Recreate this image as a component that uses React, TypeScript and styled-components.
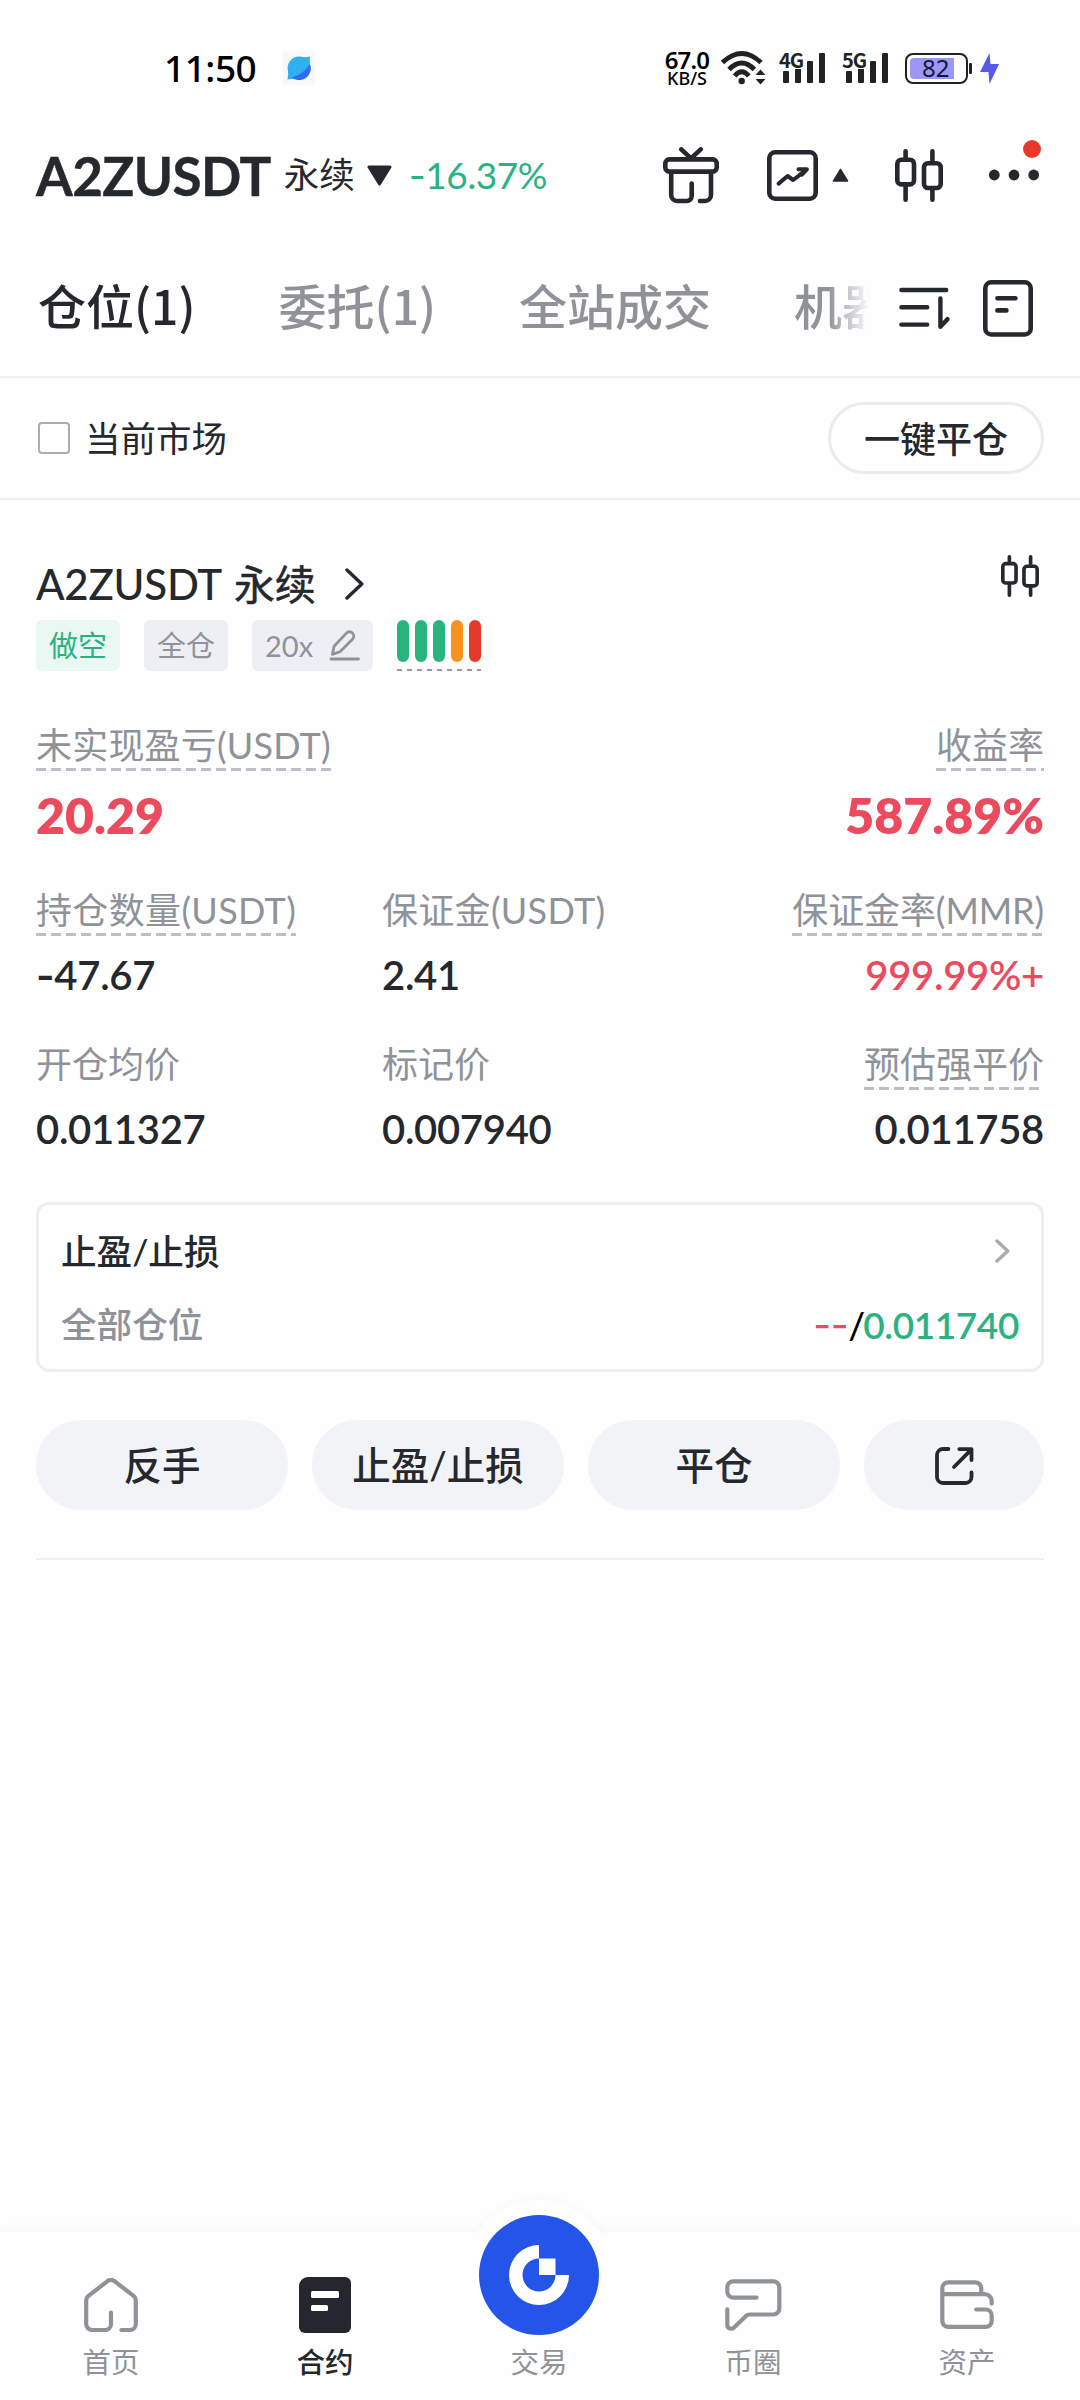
import React from "react";
import styled, { createGlobalStyle, css } from "styled-components";

const ink = "#25282d";
const grey = "#8f9399";
const green = "#2bb283";
const red = "#ec4a5f";
const line = "#eeeeee";

const Global = createGlobalStyle`
  *{box-sizing:border-box}
  body{margin:0;background:#fff}
`;

const Screen = styled.div`
  width: 1080px;
  height: 2400px;
  display: flex;
  flex-direction: column;
  overflow: hidden;
  background: #fefefe;
  color: ${ink};
  font-family: Lato, "Noto Sans CJK SC", sans-serif;
  svg { display: block; flex: none; }
`;

/* ---------- status bar ---------- */
const StatusBar = styled.header`
  height: 136px;
  padding: 0 81px 0 164px;
  display: flex;
  align-items: center;
  color: #000;
`;
const Clock = styled.span`
  font: 500 37px/44px "Noto Sans", sans-serif;
  letter-spacing: -0.5px;
  margin-right: 27px;
`;
const AppBadge = styled.span`
  width: 32px;
  height: 34px;
  display: grid;
  place-items: center;
  background: #f8f8f8;
`;
const StatusRight = styled.div`
  margin-left: auto;
  display: flex;
  align-items: center;
`;
const NetSpeed = styled.div`
  width: 46px;
  padding-top: 2px;
  display: flex;
  flex-direction: column;
  align-items: center;
  font-family: "Noto Sans", sans-serif;
  font-weight: 600;
  margin-right: 11px;
`;
const SpeedValue = styled.span`font-size: 24px; line-height: 19px; letter-spacing: -0.8px;`;
const SpeedUnit = styled.span`font-size: 18px; line-height: 19px; font-weight: 500;`;
const Signal = styled.div`
  position: relative;
  display: flex;
  align-items: flex-end;
  gap: 6px;
  height: 32px;
  width: 63px;
  padding-left: 4px;
  padding-bottom: 1px;
`;
const SignalBar = styled.i<{ $h: number }>`
  width: 6px;
  height: ${p => p.$h}px;
  border-radius: 1px;
  background: #222;
`;
const SignalLabel = styled.span`
  position: absolute;
  left: 0;
  top: -2px;
  font: 700 20px/20px "Noto Sans CJK SC", sans-serif;
  letter-spacing: -1px;
  color: #222;
  background: #fefefe;
  height: 19px;
`;
const Battery = styled.div`
  width: 63px;
  height: 31px;
  border: 2px solid #222;
  border-radius: 8px;
  padding: 3px;
`;
const Charge = styled.div`
  width: 44px;
  height: 21px;
  padding-left: 12px;
  border-radius: 4px 0 0 4px;
  background: #9b98f5;
  color: #15173a;
  font: 400 24px/20px "Noto Sans", sans-serif;
`;
const BatteryNub = styled.i`
  width: 3px;
  height: 11px;
  margin: 0 8px 0 1px;
  border-radius: 1px;
  background: #222;
`;

/* ---------- pair header ---------- */
const PairBar = styled.div`
  height: 104px;
  padding: 0 40px 26px 36px;
  display: flex;
  align-items: center;
`;
const PairName = styled.h1`
  margin: 0;
  padding-top: 1px;
  font-size: 53px;
  line-height: 60px;
  font-weight: 700;
  letter-spacing: -0.6px;
  -webkit-text-stroke: 0.4px ${ink};
`;
const PairKind = styled.span`
  margin: 0 12px 0 13px;
  font-size: 35.5px;
  line-height: 44px;
`;
const Change = styled.span`
  margin-left: 17px;
  font-size: 37px;
  line-height: 44px;
  letter-spacing: -0.4px;
  color: ${green};
`;
const Sign = styled.span`font-family: Inter, sans-serif;`;
const PairTools = styled.div`
  margin-left: auto;
  display: flex;
  align-items: center;
`;
const Tool = styled.span<{ $ml?: number }>`
  position: relative;
  margin-left: ${p => p.$ml ?? 0}px;
`;
const RedDot = styled.i`
  position: absolute;
  right: -1px;
  top: -29px;
  width: 18px;
  height: 18px;
  border-radius: 50%;
  background: #e8392b;
`;

/* ---------- tabs ---------- */
const TabBar = styled.nav`
  height: 138px;
  padding: 0 47px 0 38px;
  display: flex;
  align-items: center;
  border-bottom: 2px solid ${line};
`;
const Tabs = styled.div`
  width: 832px;
  display: flex;
  gap: 83px;
  overflow: hidden;
  mask-image: linear-gradient(90deg, #000 790px, transparent 832px);
`;
const Tab = styled.span<{ $on?: boolean }>`
  flex: none;
  font: 500 48px/80px "Noto Sans CJK SC", sans-serif;
  padding-bottom: 8px;
  color: ${p => (p.$on ? ink : grey)};
`;
const TabTools = styled.div`
  margin-left: auto;
  display: flex;
  gap: 33px;
  align-items: center;
`;

/* ---------- filter ---------- */
const FilterBar = styled.div`
  height: 122px;
  padding: 0 36px 0 38px;
  display: flex;
  align-items: center;
  border-bottom: 2px solid ${line};
`;
const CheckBox = styled.i`
  width: 32px;
  height: 32px;
  border: 2px solid #adadad;
  border-radius: 4px;
`;
const FilterText = styled.span`
  margin-left: 15px;
  padding-top: 1px;
  font-size: 35.5px;
  line-height: 48px;
`;
const CloseAll = styled.button`
  margin-left: auto;
  width: 216px;
  height: 72px;
  border: 3px solid #ebebec;
  border-radius: 36px;
  background: #fff;
  color: ${ink};
  font: 500 36px/60px Lato, "Noto Sans CJK SC", sans-serif;
  padding: 2px 0 0;
`;

/* ---------- position ---------- */
const Position = styled.section`
  margin: 0 36px;
  padding: 55px 0 48px;
  display: flex;
  flex-direction: column;
  border-bottom: 2px solid ${line};
`;
const TitleRow = styled.div`
  height: 65px;
  display: flex;
  justify-content: space-between;
  padding-right: 5px;
`;
const Title = styled.h2`
  margin: 0;
  height: 58px;
  display: flex;
  align-items: center;
  gap: 12px;
  font-size: 42px;
  line-height: 58px;
  font-weight: 500;
  letter-spacing: -0.25px;
`;
const TitleKind = styled.span`
  font-size: 41px;
  font-weight: 400;
  margin-right: 18px;
  padding-top: 1px;
  -webkit-text-stroke: 0.5px ${ink};
`;
const TagRow = styled.div`
  display: flex;
  gap: 24px;
  height: 51px;
`;
const Tag = styled.span<{ $green?: boolean }>`
  height: 51px;
  padding: 0 13px;
  display: flex;
  align-items: center;
  gap: 16px;
  border-radius: 6px;
  font-size: 29px;
  line-height: 51px;
  background: ${p => (p.$green ? "#e9f8f2" : "#eeeff5")};
  color: ${p => (p.$green ? green : grey)};
`;
const dashed = css`
  background-repeat: no-repeat;
  background-position: left bottom;
`;
const RiskBars = styled.div`
  ${dashed};
  height: 51px;
  display: flex;
  gap: 6px;
  background-image: repeating-linear-gradient(90deg, #999 0 5px, transparent 5px 10px);
  background-size: 100% 2px;
`;
const RiskBar = styled.i<{ $c: string }>`
  width: 12px;
  height: 42px;
  border-radius: 6px;
  background: ${p => p.$c};
`;
const Grid = styled.div<{ $cols: string; $mt: number }>`
  margin-top: ${p => p.$mt}px;
  display: grid;
  grid-template-columns: ${p => p.$cols};
`;
const Cell = styled.div<{ $end?: boolean }>`
  display: flex;
  flex-direction: column;
  align-items: ${p => (p.$end ? "flex-end" : "flex-start")};
`;
const Label = styled.span<{ $dash?: boolean; $ls?: number }>`
  ${dashed};
  height: 49px;
  font-size: 36px;
  line-height: 47px;
  letter-spacing: ${p => p.$ls ?? 0}px;
  color: ${grey};
  background-image: ${p => (p.$dash ? "repeating-linear-gradient(90deg, #bcbdc5 0 10px, transparent 10px 15px)" : "none")};
  background-size: 100% 3px;
`;
const Big = styled.strong`
  margin-top: 19px;
  font-size: 50px;
  line-height: 50px;
  font-weight: 800;
  color: ${red};
`;
const Value = styled.span<{ $red?: boolean }>`
  margin-top: 17px;
  font-size: 40px;
  line-height: 44px;
  font-weight: 600;
  letter-spacing: -0.3px;
  color: ${p => (p.$red ? red : ink)};
`;
const StopBox = styled.div`
  margin-top: 51px;
  height: 170px;
  padding: 24px 22px 22px;
  border: 3px solid ${line};
  border-radius: 13px;
  display: flex;
  flex-direction: column;
  justify-content: space-between;
`;
const StopRow = styled.div<{ $pr?: number }>`
  display: flex;
  align-items: center;
  justify-content: space-between;
  height: 44px;
  padding-right: ${p => p.$pr ?? 0}px;
`;
const StopTitle = styled.span`font-size: 35.6px; font-weight: 500; line-height: 44px; padding-top: 2px;`;
const StopScope = styled.span`font-size: 35.6px; line-height: 44px; color: ${grey}; font-weight: 500;`;
const StopPrices = styled.span`
  font-size: 37px;
  line-height: 44px;
  color: #000;
  font-weight: 500;
  letter-spacing: -0.4px;
`;
const Slash = styled.span`letter-spacing: -2px;`;
const Unset = styled.span`
  color: ${red};
  font: 400 39px/44px Inter, sans-serif;
`;
const StopLoss = styled.span`color: ${green}; font-weight: 600;`;
const Actions = styled.div`
  margin-top: 48px;
  display: grid;
  grid-template-columns: 252px 252px 252px 180px;
  gap: 24px;
`;
const Action = styled.button`
  height: 90px;
  padding: 1px 0 0;
  border: 0;
  border-radius: 45px;
  background: #f1f3f7;
  color: ${ink};
  font: 500 38.5px/89px Lato, "Noto Sans CJK SC", sans-serif;
  display: flex;
  align-items: center;
  justify-content: center;
`;

/* ---------- bottom nav ---------- */
const BottomNav = styled.nav`
  margin-top: auto;
  height: 168px;
  padding: 0 6px 0 4px;
  display: grid;
  grid-template-columns: repeat(5, 1fr);
  background: #fefefe;
  box-shadow: 0 -4px 10px rgba(40, 50, 70, 0.025);
`;
const NavItem = styled.div<{ $on?: boolean }>`
  position: relative;
  display: flex;
  flex-direction: column;
  align-items: center;
  padding-top: 44px;
  color: ${p => (p.$on ? ink : grey)};
`;
const NavIcon = styled.span`
  height: 58px;
  display: flex;
  align-items: center;
`;
const NavLabel = styled.span<{ $on?: boolean }>`
  margin-top: 8px;
  font-size: 28.5px;
  line-height: 40px;
  font-weight: ${p => (p.$on ? 500 : 400)};
`;
const TradeBump = styled.i`
  position: absolute;
  left: 50%;
  top: -32px;
  width: 150px;
  height: 150px;
  margin-left: -75px;
  border-radius: 50%;
  background: #fefefe;
  box-shadow: 0 -3px 8px rgba(40, 50, 70, 0.02);
  clip-path: inset(-20px -20px 115px -20px);
`;
const TradeButton = styled.span`
  position: absolute;
  left: 50%;
  top: -17px;
  margin-left: -60px;
`;

/* ---------- icons ---------- */
const stroke = { fill: "none", stroke: "currentColor", strokeLinecap: "round" as const, strokeLinejoin: "round" as const };

const Candles = ({ w, h }: { w: number; h: number }) => (
  <svg width={w} height={h} viewBox="0 0 48 53" {...stroke} strokeWidth={4.6}>
    <rect x="2.3" y="10.8" width="16.7" height="24.6" rx="4" />
    <path d="M10.6 2.3V10M10.6 36v14.7" />
    <rect x="29" y="14.2" width="16.7" height="24.8" rx="4" />
    <path d="M37.4 2.3V13M37.4 40v10.7" />
  </svg>
);
const Gift = () => (
  <svg width="56" height="57" viewBox="0 0 56 57" {...stroke} strokeWidth={4.6}>
    <rect x="2.3" y="12.4" width="51.4" height="12.2" rx="4" />
    <path d="M18.3 2.4l9.7 9 9.7-9M8.2 26v22a6 6 0 0 0 6 6h9.5a5 5 0 0 0 5-5V36.6M48 26v22a6 6 0 0 1-6 6h-5" />
  </svg>
);
const ChartBox = () => (
  <svg width="51" height="51" viewBox="0 0 51 51" {...stroke} strokeWidth={4.6}>
    <rect x="2.3" y="2.3" width="46.4" height="46.4" rx="6" />
    <path d="M11.6 33.6l9-7.6 5.6 4L39.6 19.6M31.5 19.3h8.4l-5 5.4" strokeWidth="4" />
  </svg>
);
const SortIcon = () => (
  <svg width="52" height="43" viewBox="0 0 52 43" {...stroke} strokeWidth={4.4}>
    <path d="M3.4 3h44.8M3.4 20.3h25.8M3.4 37.6h25.8M42.4 11.4v28.4l7-7.6" />
  </svg>
);
const DocIcon = () => (
  <svg width="50" height="57" viewBox="0 0 50 57" {...stroke} strokeWidth={4.6}>
    <rect x="2.3" y="2.3" width="45.4" height="52.2" rx="6" />
    <path d="M14.4 18.3h18M14.4 30.4h9" />
  </svg>
);
const Pencil = () => (
  <svg width="31" height="31" viewBox="0 0 31 31" {...stroke} strokeWidth={2.8}>
    <path d="M3.4 24.4l1.7-8.2L17.4 3.1a4.1 4.1 0 0 1 6.1 0 4.4 4.4 0 0 1 0 6.1L11 21.8zM2 29h27.500" />
  </svg>
);
const Share = () => (
  <svg width="39" height="38" viewBox="0 0 39 38" {...stroke} strokeWidth={3.8}>
    <path d="M13.4 2H8a6 6 0 0 0-6 6v22a6 6 0 0 0 6 6h22.5a6 6 0 0 0 6-6v-4.5M24.3 2.1h12.2v11M36 2.8L19 20" />
  </svg>
);
const Home = () => (
  <svg width="54" height="54" viewBox="0 0 54 54" {...stroke} strokeWidth={4.2}>
    <path d="M27 34.6V46a6 6 0 0 1-6 6H8.2a6 6 0 0 1-6-6V22.6a6 6 0 0 1 2.2-4.7L23.5 3.2a5.6 5.6 0 0 1 7 0l19.1 14.7a6 6 0 0 1 2.2 4.7V46a6 6 0 0 1-6 6h-8.4" />
  </svg>
);
const Contract = () => (
  <svg width="52" height="56" viewBox="0 0 52 56">
    <path fill="#25272f" d="M9 0h37a6 6 0 0 1 6 6v44a6 6 0 0 1-6 6H6a6 6 0 0 1-6-6V9a9 9 0 0 1 9-9z" />
    <rect x="12" y="14" width="28" height="7" rx="1.5" fill="#fff" />
    <rect x="12" y="28" width="17" height="6" rx="1.5" fill="#fff" />
  </svg>
);
const Chat = () => (
  <svg width="57" height="52" viewBox="0 0 57 52" {...stroke} strokeWidth={4.2}>
    <path d="M31.5 18.7H8.8a6.3 6.3 0 0 1-6.5-6.3V8.3a6 6 0 0 1 6-6h40a6 6 0 0 1 6 6v21.2a6 6 0 0 1-6 6H24.6a5 5 0 0 0-3.8 1.7L9 48.4c-2.2 2.2-6.7 1.3-6.7-2.4V30.4" />
  </svg>
);
const Wallet = () => (
  <svg width="54" height="50" viewBox="0 0 54 50" {...stroke} strokeWidth={4.2}>
    <path d="M2.3 14.2h42.4a7 7 0 0 1 7 7v2.4M41.2 13.4V8.3a6 6 0 0 0-6-6H8.3a6 6 0 0 0-6 6v32.6a6 6 0 0 0 6 6h37.4a6 6 0 0 0 6-6v-5.4a6 6 0 0 0-6-6H36.2" />
  </svg>
);
const Trade = () => (
  <svg width="120" height="120" viewBox="0 0 120 120">
    <circle cx="60" cy="60" r="60" fill="#2455e8" />
    <path fill="#fff" d="M60 30a30 30 0 1 0 30 30H76.5a16.5 16.5 0 1 1-16.5-16.5z" />
    <path fill="#fff" d="M60 43.5h16.5V60H60z" />
  </svg>
);
const Wifi = () => (
  <svg width="46" height="36" viewBox="0 0 46 36" fill="none" stroke="#222" strokeWidth="4.8">
    <path d="M1.5 12.5Q20.7-5.5 40 12.5M8 19.5Q20.7 6.500 33.4 19.5M13.6 26Q20.7 17.500 27.8 26" />
    <circle cx="20.7" cy="31" r="3.2" fill="#222" stroke="none" />
    <path d="M34.500 25l5-5.500 5 5.500zM34.500 29h10l-5 5.500z" fill="#222" stroke="none" />
  </svg>
);
const Leaf = () => (
  <svg width="24" height="24" viewBox="0 0 24 24">
    <circle cx="12" cy="12" r="11.400" fill="#2fb1ee" />
    <path d="M14 1Q19 1.500 23 .5 22.500 5 23 10zM1 14Q1.500 19 .5 23.500 6 22.500 10 23z" fill="#2fb1ee" />
    <path d="M22.800 8A11.500 11.500 0 0 1 5 21.500Q17 18 22.800 8z" fill="#2f6bf5" />
  </svg>
);

const stats = [
  [
    { label: "持仓数量(USDT)", value: "47.67", neg: true, dash: true, ls: 0.35 },
    { label: "保证金(USDT)", value: "2.41", ls: 0.3 },
    { label: "保证金率(MMR)", value: "999.99%+", dash: true, red: true, ls: -0.1 },
  ],
  [
    { label: "开仓均价", value: "0.011327" },
    { label: "标记价", value: "0.007940" },
    { label: "预估强平价", value: "0.011758", dash: true },
  ],
] as { label: string; value: string; dash?: boolean; red?: boolean; neg?: boolean; ls?: number }[][];

const signals = ["4G", "5G"];
const barHeights = [12, 15, 22, 30];
const risk = ["#27b57d", "#27b57d", "#27b57d", "#f7931e", "#e5392c"];

export default function App() {
  return (
    <Screen>
      <Global />
      <StatusBar>
        <Clock>11:50</Clock>
        <AppBadge><Leaf /></AppBadge>
        <StatusRight>
          <NetSpeed><SpeedValue>67.0</SpeedValue><SpeedUnit>KB/S</SpeedUnit></NetSpeed>
          <Wifi />
          {signals.map((s, i) => (
            <Tool key={s} $ml={i ? 0 : 12}>
              <Signal>
                {barHeights.map(h => <SignalBar key={h} $h={h} />)}
                <SignalLabel>{s}</SignalLabel>
              </Signal>
            </Tool>
          ))}
          <Battery><Charge>82</Charge></Battery>
          <BatteryNub />
          <svg width="19" height="31" viewBox="0 0 19 31"><path d="M9.5 0L0 19h8.5l1 12L19 11h-8.5z" fill="#5759ea" /></svg>
        </StatusRight>
      </StatusBar>

      <PairBar>
        <PairName>A2ZUSDT</PairName>
        <PairKind>永续</PairKind>
        <svg width="25" height="21" viewBox="0 0 25 21"><path d="M2 2h21L12.5 19z" fill={ink} stroke={ink} strokeWidth="3" strokeLinejoin="round" /></svg>
        <Change><Sign>-</Sign>16.37%</Change>
        <PairTools>
          <Tool><Gift /></Tool>
          <Tool $ml={48}><ChartBox /></Tool>
          <Tool $ml={14}><svg width="17" height="14" viewBox="0 0 17 14"><path d="M8.5 1.5L15.5 13h-14z" fill={ink} stroke={ink} strokeWidth="1.5" strokeLinejoin="round" /></svg></Tool>
          <Tool $ml={46}><Candles w={48} h={53} /></Tool>
          <Tool $ml={45}>
            <svg width="52" height="12" viewBox="0 0 52 12" fill={ink}><circle cx="6.3" cy="6" r="5.4" /><circle cx="26" cy="6" r="5.4" /><circle cx="45.7" cy="6" r="5.4" /></svg>
            <RedDot />
          </Tool>
        </PairTools>
      </PairBar>

      <TabBar>
        <Tabs><Tab $on>仓位(1)</Tab><Tab>委托(1)</Tab><Tab>全站成交</Tab><Tab>机器</Tab></Tabs>
        <TabTools><SortIcon /><DocIcon /></TabTools>
      </TabBar>

      <FilterBar>
        <CheckBox />
        <FilterText>当前市场</FilterText>
        <CloseAll>一键平仓</CloseAll>
      </FilterBar>

      <Position>
        <TitleRow>
          <Title>
            A2ZUSDT<TitleKind>永续</TitleKind>
            <svg width="19" height="32" viewBox="0 0 19 32" {...stroke} strokeWidth={3.4}><path d="M2 2l14.8 14L2 30" /></svg>
          </Title>
          <Candles w={38} h={42} />
        </TitleRow>
        <TagRow>
          <Tag $green>做空</Tag>
          <Tag>全仓</Tag>
          <Tag>20x<Pencil /></Tag>
          <RiskBars>
            {risk.map((c, i) => <RiskBar key={i} $c={c} />)}
          </RiskBars>
        </TagRow>
        <Grid $cols="1fr 1fr" $mt={51}>
          <Cell><Label $dash $ls={0.2}>未实现盈亏(USDT)</Label><Big>20.29</Big></Cell>
          <Cell $end><Label $dash>收益率</Label><Big>587.89%</Big></Cell>
        </Grid>
        {stats.map((row, i) => (
          <Grid key={i} $cols="346px 1fr 1fr" $mt={i ? 43 : 47}>
            {row.map((s, j) => (
              <Cell key={s.label} $end={j === 2}>
                <Label $dash={s.dash} $ls={s.ls}>{s.label}</Label>
                <Value $red={s.red}>{s.neg && <Sign>-</Sign>}{s.value}</Value>
              </Cell>
            ))}
          </Grid>
        ))}
        <StopBox>
          <StopRow $pr={9}>
            <StopTitle>止盈/止损</StopTitle>
            <svg width="15" height="24" viewBox="0 0 15 24" {...stroke} stroke="#a9abad" strokeWidth={3.4}><path d="M2 2l10.8 10L2 22" /></svg>
          </StopRow>
          <StopRow>
            <StopScope>全部仓位</StopScope>
            <StopPrices><Unset>--</Unset><Slash>/</Slash><StopLoss>0.011740</StopLoss></StopPrices>
          </StopRow>
        </StopBox>
        <Actions>
          <Action>反手</Action>
          <Action>止盈/止损</Action>
          <Action>平仓</Action>
          <Action><Share /></Action>
        </Actions>
      </Position>

      <BottomNav>
        <NavItem><NavIcon><Home /></NavIcon><NavLabel>首页</NavLabel></NavItem>
        <NavItem $on><NavIcon><Contract /></NavIcon><NavLabel $on>合约</NavLabel></NavItem>
        <NavItem><TradeBump /><TradeButton><Trade /></TradeButton><NavIcon /><NavLabel>交易</NavLabel></NavItem>
        <NavItem><NavIcon><Chat /></NavIcon><NavLabel>币圈</NavLabel></NavItem>
        <NavItem><NavIcon><Wallet /></NavIcon><NavLabel>资产</NavLabel></NavItem>
      </BottomNav>
    </Screen>
  );
}
